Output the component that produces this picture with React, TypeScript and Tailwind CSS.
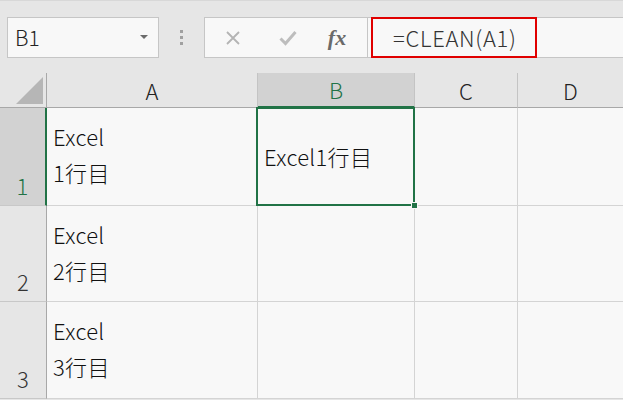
import React from 'react'

const font = { fontFamily: '"Noto Sans CJK JP", "Noto Sans", sans-serif' }

function ColHead({ label, selected, last }: { label: string; selected?: boolean; last?: boolean }) {
  return (
    <div
      className={`flex items-center justify-center text-[22px] ${last ? '' : 'border-r border-r-[#c4c4c4]'} ${
        selected
          ? 'bg-[#d2d2d2] text-[#217346] border-b-2 border-b-[#217346]'
          : 'bg-[#e6e6e6] text-[#222] border-b border-b-[#a8a8a8]'
      }`}
    >
      {label}
    </div>
  )
}

function RowHead({ n, selected }: { n: number; selected?: boolean }) {
  return (
    <div
      className={`flex items-end justify-center pb-[3px] text-[22px] border-b border-b-[#c8c8c8] ${
        selected
          ? 'bg-[#d2d2d2] text-[#217346] border-r-2 border-r-[#217346]'
          : 'bg-[#e6e6e6] text-[#333] border-r border-r-[#a8a8a8]'
      }`}
    >
      {n}
    </div>
  )
}

function Cell({ children, last }: { children?: React.ReactNode; last?: boolean }) {
  return (
    <div
      className={`bg-[#f8f8f8] border-b border-b-[#d4d4d4] ${last ? '' : 'border-r border-r-[#d4d4d4]'} text-[22px] text-[#111]`}
    >
      {children}
    </div>
  )
}

function TwoLines({ n }: { n: number }) {
  return (
    <div className="pl-[6px] pt-[10px] leading-[36px] tracking-[0.3px]">
      <div>Excel</div>
      <div>{n}行目</div>
    </div>
  )
}

export default function App() {
  return (
    <div className="w-[623px] h-[400px] overflow-hidden bg-[#e6e6e6] select-none font-light" style={font}>
      {/* toolbar */}
      <div className="h-[73px] flex items-start pt-[16px] pl-[7px] border-t border-t-[#d8d8d8]">
        <div className="w-[152px] h-[41px] bg-[#f8f8f8] border border-[#c6c6c6] flex items-center justify-between pl-[7px] pr-[10px]">
          <span className="text-[21px] text-[#222]">B1</span>
          <svg width="8" height="5" viewBox="0 0 8 5">
            <polygon points="0,0 8,0 4,4" fill="#6b6b6b" />
          </svg>
        </div>
        <div className="w-[45px] h-[41px] flex flex-col items-center justify-center gap-[3px]">
          <span className="w-[3px] h-[3px] bg-[#a0a0a0]" />
          <span className="w-[3px] h-[3px] bg-[#a0a0a0]" />
          <span className="w-[3px] h-[3px] bg-[#a0a0a0]" />
        </div>
        <div className="w-[164px] h-[41px] bg-[#f8f8f8] border border-[#c6c6c6] flex items-center">
          <div className="w-[56px] flex justify-center">
            <svg width="16" height="16" viewBox="0 0 16 16">
              <path d="M2 2 L14 14 M14 2 L2 14" stroke="#b4b4b4" strokeWidth="1.8" fill="none" />
            </svg>
          </div>
          <div className="w-[54px] flex justify-center">
            <svg width="18" height="16" viewBox="0 0 18 16">
              <path d="M1.5 8.5 L6.5 13.5 L16.5 2" stroke="#bdbdbd" strokeWidth="3" fill="none" />
            </svg>
          </div>
          <div className="w-[44px] flex justify-center">
            <span
              className="text-[22px] italic font-bold text-[#6a6a6a]"
              style={{ fontFamily: '"Liberation Serif", "DejaVu Serif", serif' }}
            >
              fx
            </span>
          </div>
        </div>
        <div className="flex-1 h-[41px] bg-[#f8f8f8] border-y border-[#c6c6c6] flex items-center pl-[3px]">
          <div className="w-[166px] h-[41px] -my-[1px] border-2 border-[#e00000] flex items-center pl-[20px] text-[22px] text-[#333] tracking-[0.7px]">
            =CLEAN(A1)
          </div>
        </div>
      </div>

      {/* sheet grid */}
      <div className="grid grid-cols-[47px_211px_157px_103px_1fr] grid-rows-[35px_98px_96px_97px]">
        <div className="bg-[#e6e6e6] border-r border-r-[#a8a8a8] border-b border-b-[#a8a8a8] flex items-end justify-end pr-[3px] pb-[3px]">
          <svg width="27" height="27" viewBox="0 0 27 27">
            <polygon points="27,0 27,27 0,27" fill="#b6b6b6" />
          </svg>
        </div>
        <ColHead label="A" />
        <ColHead label="B" selected />
        <ColHead label="C" />
        <ColHead label="D" last />

        <RowHead n={1} selected />
        <Cell>
          <TwoLines n={1} />
        </Cell>
        <div className="relative bg-[#f8f8f8] border-b border-b-[#d4d4d4] border-r border-r-[#d4d4d4] text-[22px] text-[#111] flex items-center pl-[6px] tracking-[0.3px]">
          Excel1行目
          <div className="absolute -left-[2px] -top-[1px] -right-[1px] -bottom-[1px] border-2 border-[#217346]" />
          <div className="absolute -right-[4px] -bottom-[4px] w-[7px] h-[7px] bg-[#217346] border border-[#f8f8f8]" />
        </div>
        <Cell />
        <Cell last />

        <RowHead n={2} />
        <Cell>
          <TwoLines n={2} />
        </Cell>
        <Cell />
        <Cell />
        <Cell last />

        <RowHead n={3} />
        <Cell>
          <TwoLines n={3} />
        </Cell>
        <Cell />
        <Cell />
        <Cell last />
      </div>
    </div>
  )
}
